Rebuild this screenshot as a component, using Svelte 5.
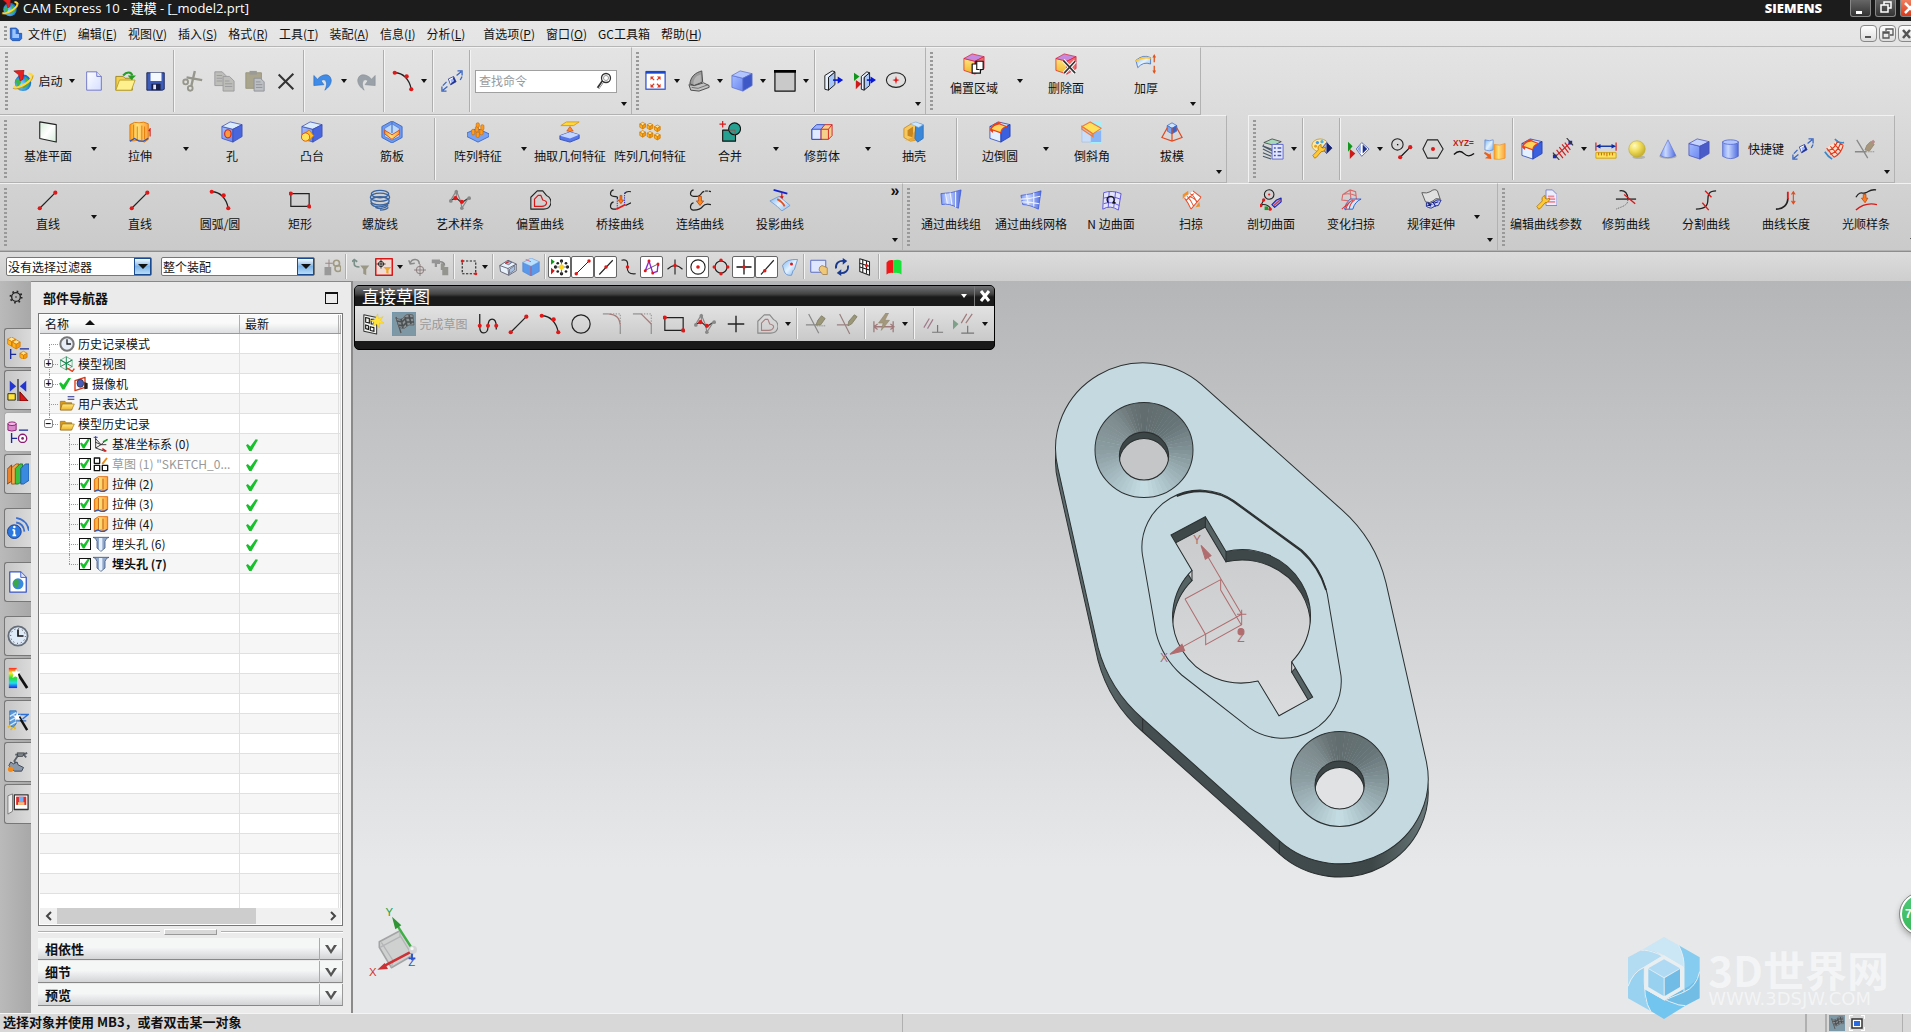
<script lang="ts">
	type Item = { kind: 'big' | 'icon' | 'text' | 'sep'; icon?: string; label?: string; drop?: boolean; on?: boolean };

	const big = (icon: string, label: string, drop = false): Item => ({ kind: 'big', icon, label, drop });
	const ico = (icon: string, drop = false, on = false): Item => ({ kind: 'icon', icon, drop, on });
	const sep: Item = { kind: 'sep' };

	// --- icon parts, drawn on a 24 x 24 grid ---
	const dot = (x: number, y: number, r = 2) => `<circle cx="${x}" cy="${y}" r="${r}" fill="#e01818"/>`;
	const line = (d: string, c = '#111', w = 1.3) => `<path d="${d}" fill="none" stroke="${c}" stroke-width="${w}"/>`;
	const fill = (d: string, c: string, s = 'none', w = 1) => `<path d="${d}" fill="${c}" stroke="${s}" stroke-width="${w}" stroke-linejoin="round"/>`;

	function cube(cx: number, cy: number, r: number, top = '#eef4ff', left = '#6f8df5', right = '#3f60d8', edge = '#2a45b0') {
		const w = r * 0.87;
		const h = r * 0.5;
		return (
			fill(`M${cx} ${cy - r}l${w} ${h}l${-w} ${h}l${-w} ${-h}z`, top, edge, 0.8) +
			fill(`M${cx - w} ${cy - h}l${w} ${h}v${r}l${-w} ${-h}z`, left, edge, 0.8) +
			fill(`M${cx + w} ${cy - h}l${-w} ${h}v${r}l${w} ${-h}z`, right, edge, 0.8)
		);
	}

	// A block seen with its wide front face on the left.
	const box = (top = '#dcecff', front = 'url(#gFront)', side = '#4a66dc', edge = '#3448b0') =>
		fill('M1 6L13 9V23L1 19Z', front, edge, 0.8) + fill('M1 6L10 1L23 4L13 9Z', top, edge, 0.8) + fill('M13 9L23 4V17L13 23Z', side, edge, 0.8);

	const goldCube = (x: number, y: number, r: number) => cube(x, y, r, '#ffe39a', '#ffb21e', '#f59a10', '#d07800');
	const arrowDown = fill('M10.5 8h3v5h2.5l-4 5-4-5h2.5z', '#ff8a1c', '#b33a00', 0.8);
	const diamond = fill('M12 5l6 6-6 7-6-7z', '#fff', '#1d2f8f') + fill('M12 5l6 6-6 7z', '#1d2f8f') + fill('M12 8l3 3-3 4-3-4z', '#9fb4ff');
	const folder =
		fill('M2 8h7l2 2h8v11H2z', '#d99a18', '#8a5a00', 0.8) + fill('M5 12h18l-4 9H2z', 'url(#gGold)', '#8a5a00', 0.8);
	const wrench = fill('M4 22l-2-3 6-6c-1-3 0-5 3-6l0 3 2 1 3-1c0 3-2 5-5 5l-5 6z', '#ffc933', '#a86c00', 0.8);
	const sketchSpline = line('M2 12l6-2 6 5 7-5', '#222', 1.2) + line('M2 12L8 2l5 12 1 7M14 21l7-11M8 2v8', '#888', 1.3) +
		'<g fill="#888"><circle cx="8" cy="3" r="2"/><circle cx="2" cy="13" r="2"/><circle cx="22" cy="10" r="2"/><circle cx="14" cy="21" r="2"/></g>' + dot(7, 10, 2.3) + dot(14, 14, 2.3);
	const pages = (c: string, s: string) =>
		fill('M2 2h8l4 4v11H2z', c, s) + fill('M11 7h7l5 5v11H11z', c, s) + line('M4 6h6M4 9h6M4 12h6M13 12h5M13 15h8M13 18h8', s, 1);

	const icons: Record<string, string> = {
		app: '<circle cx="12" cy="14" r="9" fill="url(#gGlobe)"/>' + fill('M14 7q5 3 5 8-5 6-8 5 6-6 3-13zM4 11l4-1 2 4-4 5z', '#3ab84a') + line('M2 18C5 22 22 13 22 6q-1-2-4-2', '#ffd83a', 2.6) + line('M1 20c5 3 22-5 22-14', '#b88400', 0.7) + fill('M2 1l11-1-1 10-3 2-2-7z', '#e52020', '#8a0808', 0.6),
		part: fill('M5 3h9l3 3v5h5v8l-3 3H8l-3-3z', '#2f73dd', '#153f94') + fill('M8 5h5v7h5v6H8z', '#9cc4ff'),
		new: fill('M4 2h11l5 5v15H4z', 'url(#gPaper)', '#6a70c8') + fill('M15 2v5h5', '#dfe6ff', '#6a70c8'),
		open: fill('M2 7h8l2 2h8v13H2z', '#f2cf4c', '#9a8520') + fill('M6 11h17l-4 11H2z', '#fff08e', '#b8a030') + line('M10 6c4-5 9-4 10 0', '#279c27', 2.2) + fill('M15 6h9l-5 5z', '#279c27'),
		save: fill('M2 3h19v18l-2 1H2z', '#3c5cb8', '#1a2458') + fill('M6 3h12v9H6z', '#f4f8ff') + fill('M7 15h10v7H7z', '#182048') + fill('M9 16h3v5H9z', '#dfe6ff'),
		cut: line('M5 8l17 3M14 1l-4 17', '#96968c', 2.6) + '<g fill="none" stroke="#96968c" stroke-width="2"><circle cx="4" cy="13" r="2.6"/><circle cx="9" cy="20" r="2.6"/></g>',
		copy: pages('#bdbdba', '#9a9a9c'),
		paste: fill('M2 3h17v17H2z', '#a9a58c', '#98957c') + fill('M6 1h8v4H6z', '#9a9a96') + fill('M11 9h7l4 4v10H11z', '#bcbfc4', '#8e9096') + line('M13 13h5M13 16h7M13 19h7', '#8e9096', 1),
		del: line('M4 5l16 16M20 4L4 20', '#333', 2.2),
		undo: fill('M2 6l4 4c5-6 14-7 15 1 0 5-3 8-7 11 2-4 3-9 0-11-2-1-3 0-4 1l3 4-11 1z', '#3f8be8', '#2a6cc0', 0.7),
		redo: fill('M22 6l-4 4C13 4 4 3 3 11c0 5 3 8 7 11-2-4-3-9 0-11 2-1 3 0 4 1l-3 4 11 1z', '#9aa1a8', '#8a9198', 0.7),
		arc: line('M3 3c9 0 16 7 18 18', '#222', 1.4) + dot(3, 3, 2.3) + dot(16, 7, 2.3) + dot(21, 21, 2.3),
		repeat: '<g transform="rotate(20 12 12) translate(3 3) scale(.75)">' + diamond + '</g>' + line('M17 6l5-4M18 1h5v5M21 11l2-4M7 18l-5 4M1 18v5h5M6 13l-4 4', '#3a66c0', 1.4),
		fit: fill('M1 2h21v19H1z', '#fff', '#4a68d8', 1.6) + fill('M1 1h21v3H1z', '#1a48c8') + line('M7 8l3 3M16 8l-3 3M7 18l3-3M16 18l-3-3', '#e33820', 1.3) + fill('M6 7h4l-4 4zM17 7v4l-4-4zM6 19v-4l4 4zM17 19h-4l4-4z', '#e33820'),
		orient: fill('M2 15C3 7 8 3 15 1l1 12-9 4z', '#9a9a9a', '#444') + fill('M6 13c1-5 4-7 8-8v8l-8 3z', '#b6b6b6') + fill('M1 16l6 1 10-3 6 3v2l-11 4-9-1z', '#c2c2c2', '#444') + line('M4 19l7 1 11-4', '#555', 0.8),
		shaded: box('#b4c6ff', 'url(#gFront)', '#3f58c8', '#5a70d0'),
		bgrect: fill('M1 1h22v22H1z', '#c9c9c9', '#111', 1.3) + fill('M0 0h24v3H0z', '#000'),
		section: fill('M6 8l7-6v14l-7 6z', '#a9c7f8', '#111') + fill('M2 6l8-5 3 1-7 6v14l-4-1z', '#e9f1ff', '#111') + line('M11 11h8', '#0718d8', 1.8) + fill('M16 7l6 4-6 4z', '#0718d8'),
		sectionEdit: fill('M0 3l6 4-6 5z', '#12951c') + fill('M2 11l6 4-6 6z', '#d01818') + fill('M11 8l6-5v14l-6 5z', '#a9c7f8', '#111') + fill('M8 7l6-5 3 1-6 5v14l-3-1z', '#e9f1ff', '#111') + line('M14 11h6', '#0718d8', 1.8) + fill('M18 7l6 4-6 4z', '#0718d8'),
		ellipse: '<ellipse cx="12" cy="11" rx="10.5" ry="8" fill="none" stroke="#222" stroke-width="1.2"/>' + fill('M12 6.500l1 3.500 3 1-3 1-1 3.500-1-3.500-3-1 3-1z', '#e01818'),
		offsetFace: box('#c58ae0', 'url(#gGold)', '#f06a6a', '#d8203a') + fill('M10 12h4V9h8v9h-3v4h-9z', '#fff', '#111', 1.3) + line('M15 9v9h3', '#111', 1.2),
		deleteFace: box('#c58ae0', 'url(#gGold)', '#f06a6a', '#d8203a') + line('M9 8l13 14M22 9L10 22', '#fff', 4) + line('M9 8l13 14M22 9L10 22', '#333', 1.8),
		thicken: fill('M1 8q8-7 16-3v7q-8-3-14 4z', 'url(#gPale)', '#3565b8', 0.8) + line('M1 9q8-6 16-3', '#ffc83a', 2) + line('M21 3v7M21 14v7', '#e0531c', 1.4) + fill('M19 5l2-4 2 4zM19 19l2 4 2-4z', '#e0531c'),

		plane: fill('M3 1l18 3v19L3 19z', 'url(#gMint)', '#222', 1.2),
		extrude: fill('M1 4q5-4 10-2 5-2 10 1v17l-4 3-6-2-10 1z', 'url(#gOrange)', '#e07800') + line('M5 4v16M9 6v15M14 5v16M17 6v14', '#e07800', 1) + line('M1 22l5-3 5 3 5 0 5-3', '#2a58c8', 1.4) + line('M23 17V8M21.5 11l2-3', '#d81818', 1.2),
		hole: box() + '<ellipse cx="7.5" cy="14" rx="3.5" ry="4.5" fill="#ff9a3c" stroke="#d02020" stroke-width="1.2"/>',
		boss: box() + fill('M3 14l6-4 5 6-6 6z', '#ffc02a', '#d07800') + '<circle cx="5" cy="17.5" r="4.500" fill="#ffe35a" stroke="#e04a10"/>',
		rib: fill('M12 0l11 6v12l-11 6L1 18V6z', '#6f9af0', '#3a68c8') + fill('M12 3l8 5v9l-8 4-8-4V8z', '#bcd8fb', '#4a76c8', 0.8) + line('M12 1v12', '#4a76c8') + fill('M4 10l8 5 8-5v4l-8 6-8-6z', 'url(#gOrange)', '#d84a10'),
		pattern: fill('M0 13l11-5 13 6v3l-12 6-12-6z', '#79a3f2', '#3a68c8') + '<g fill="#ff9a1c" stroke="#c06400" stroke-width=".6"><rect x="5" y="9" width="3.5" height="6" rx="1.5"/><rect x="10" y="12" width="3.5" height="6" rx="1.5"/><rect x="9" y="6" width="3.5" height="6" rx="1.5"/><rect x="14" y="9" width="3.5" height="6" rx="1.5"/><rect x="10" y="2" width="3.500" height="5" rx="1.5"/><rect x="15" y="4" width="3.5" height="6" rx="1.5"/></g>',
		extract: fill('M2 5l6-4h14l-6 4z', '#ffd83a', '#d89a20') + fill('M11 15V11H8.500l3.500-5 3.500 5H13v4z', '#ff8a2c', '#c84a00', 0.7) + fill('M1 16v4l11 3 10-4v-4l-10-3z', '#5577ea', '#3450b8') + fill('M1 16l11-4 10 3-10 4z', '#c4d6ff'),
		patternGeom: goldCube(4, 5, 3.6) + goldCube(12, 6, 3.6) + goldCube(20, 8, 3.6) + goldCube(4, 14, 3.6) + goldCube(12, 15, 3.6) + goldCube(20, 17, 3.6),
		unite: fill('M4 10h14v12H4z', '#26a090', '#111', 1.2) + '<circle cx="17" cy="8.5" r="6.5" fill="#26a090" stroke="#111" stroke-width="1.2"/>' + line('M10.5 10h7v5', '#b04040', 0.8) + line('M4 0v7M.5 3.5h7', '#d81818', 1.3),
		trimBody: fill('M1 9l5-5h9v12l-3 4H1z', '#9db2ff', '#2a45c0') + fill('M1 9h10v11H1z', '#dfe9ff', '#2a45c0') + fill('M11 9l4-5h8v12l-4 4h-8z', '#f4d08a', '#d02020', 1) + line('M11 9h8v11M19 9l4-5', '#d02020', 1),
		shell: fill('M1 8l8-5 5-1v19l-6 1-7-4z', '#f5c860', '#c89030') + fill('M5 10l6-4v12l-6-2z', '#c8861c') + fill('M11 13l4-4v12H2l8-3z', '#f0a830') + fill('M14 2l8 2v15l-6 4-3-4z', '#3c88d8', '#3070c0') + fill('M8 3l6-2 8 3-5 3z', '#cfe8ff', '#7aa8d8', 0.6),
		edgeBlend: box('#cfe4ff', '#e4f0ff', '#3a60e0', '#1a38b0') + fill('M1 10q1-6 9-9l4 1q-8 3-9 8l-1 3z', '#e8401c') + fill('M2 9q2-5 9-6l8 3q-6 2-6 7z', '#ffd45a', '#e8401c', 1.4),
		chamfer: fill('M9 0h14v24H9z', '#a6eef8') + fill('M1 8l10 6v9H1z', '#c9dcf8', '#9ab8e0', 0.6) + fill('M11 14l11-4v13H11z', '#8ab4f8') + fill('M1 6l9-5 12 7-9 6z', '#ffe25a', '#f07a3a', 1.2) + line('M1 6l12 8v3L1 9z', '#f07a3a', 1.4),
		draft: cube(12, 8, 6, '#cfe4ff', '#7aa4f0', '#3565c8', '#3a68c8') + line('M12 8v14M7 7L1 18l11 4 11-4L17 7', '#e04a20', 1.3),
		layers: fill('M2 5l9-4 10 3-8 4z', '#a8d8bc', '#333', 0.8) + line('M2 9l11 4M1 12l10 5M1 16l9 4M1 20l9 3M2 7l-1 2 10 5', '#456', 1.2) + fill('M11 7h12v16H11z', '#e4e8ff', '#5a62c8') + line('M13 11h2M13 15h2M13 19h2M17 11h4M17 15h4M17 19h4', '#4455b8', 1.6),
		palette: '<ellipse cx="10" cy="8" rx="9" ry="7" fill="#ffe9a8" stroke="#c8a040"/><circle cx="7" cy="5" r="1.8" fill="#3a9af0"/><circle cx="12" cy="4" r="1.8" fill="#4ab0e0"/><circle cx="5" cy="9" r="1.6" fill="#e8a01c"/>' + fill('M17 5l6 6-6 6-5-6z', '#aab4d8', '#1d2f8f', 0.8) + fill('M17 5l6 6-6 6z', '#15206a') + wrench,
		triDiamond: fill('M0 4l5 5-5 6z', '#12951c') + fill('M2 12l6 5-6 6z', '#d01818') + fill('M15 5l8 7-8 8-6-8z', '#fff', '#5a68a8') + fill('M14 7v10l-4-5z', '#8fa4e8') + fill('M16 7v10l5-5z', '#1d2f8f'),
		circleLine: '<circle cx="7" cy="7" r="6.2" fill="none" stroke="#222" stroke-width="1.2"/>' + line('M21 10l-11 11') + dot(21, 10, 2.3) + dot(10, 21, 2.3) + fill('M6.5 6.5h1.5v1.5H6.500z', '#111'),
		hexagon: line('M6 2h11l6 10-6 10H6L1 12z', '#222', 1.2) + dot(12, 12, 2.2),
		xyz: '<text x="0" y="9" font-size="9" font-weight="700" font-family="Liberation Sans, sans-serif" fill="#c01818">XYZ=</text>' + line('M1 18c4-4 8-4 11-1s6 4 11 0', '#111', 1.4),
		bend: fill('M1 2q5 2 9 0v11q-4 2-9 0z', 'url(#gPale)', '#5a88d8', 0.8) + fill('M11 7q6 2 12-1v16q-6 2-12 1z', 'url(#gOrange)', '#e8942c', 0.8) + fill('M1 15l5 3 1-2 1 7-7-1 3-2-4-3z', '#e8601c'),
		dimLine: line('M4 20L20 5', '#d02020', 1.3) + line('M5 13l7 9M8 10l7 9M11 7l7 9M14 5l6 8', '#d02020', 1.3) + fill('M1 18h4v4H1zM18 3h4v4h-4z', '#1a28c8') + line('M1 16l7 8M16 0l7 8', '#333', 1.2),
		measure: line('M1 5v9M23 5v9', '#d02020', 1.3) + line('M3 9h18', '#1a3aa8', 1.6) + fill('M1 9l5-2.500v5zM23 9l-5-2.500v5z', '#0a2aa8') + fill('M1 16h22v6H1z', '#ffe25a', '#d0a000') + line('M4 16v3M7 16v3M10 16v3M13 16v4M16 16v3M19 16v3', '#c05a00', 1),
		sphere: '<ellipse cx="14" cy="21" rx="7" ry="2" fill="#b4b4b4"/><circle cx="12" cy="12" r="9" fill="url(#gSphere)" stroke="#b8aa28" stroke-width=".6"/>',
		cone: '<ellipse cx="12" cy="20" rx="9.5" ry="2.500" fill="#aaa"/>' + fill('M12 2l8.500 17q-8.500 5-17 0z', 'url(#gCyl)', '#5a70d0', 0.7),
		block: box('#c4d4ff', 'url(#gFront)', '#4a5cc8', '#4450b8'),
		cylinder: fill('M4 4v16q9 5 17 0V4z', 'url(#gCyl)', '#4a60c8', 0.8) + '<ellipse cx="12.5" cy="4.5" rx="8.5" ry="2.500" fill="#b4c6ff" stroke="#4a60c8" stroke-width=".8"/>',
		mesh: fill('M4 11l11-8 7 5-10 13z', '#ffe0cc') + line('M4 11l8 10M8 9l8 9M12 6l7 8M15 3l7 5M5 14q8-2 11-11M8 18q8-3 11-12M12 21q8-4 10-13', '#e0381c', 1.2) + line('M13 1q4 5 10 4M2 15q3 5 8 8', '#3a88c8', 1.8),
		eraseTrim: line('M3 2l12 20M1 15h12', '#888', 1.4) + '<path d="M13 15h10" stroke="#777" stroke-dasharray="1 1"/>' + fill('M12 13l2-5 4-4 4 3-5 7z', '#a8967c', '#968a70') + fill('M18 4l3-2 2 2-2 3z', '#b88a8a'),

		line: line('M3 21L20 4', '#222', 1.3) + dot(3, 21, 2.3) + dot(20, 4, 2.3),
		rect: line('M2 5h20v14H2z', '#222', 1.3) + dot(2, 5, 2.3) + dot(22, 19, 2.3),
		helix: '<g fill="none" stroke="#3a64a0" stroke-width="1.500"><ellipse cx="12" cy="5.500" rx="9.500" ry="4"/><ellipse cx="12" cy="9" rx="10.5" ry="4.500"/><ellipse cx="12" cy="13" rx="10" ry="4.5"/><path d="M2 15c2 6 14 6 20 0M7 20c4 2 9 2 14-2M12 23q7 0 9-3"/></g>',
		spline: sketchSpline,
		offsetCurve: fill('M2 22V9l7-7h6l4 5q5 2 5 8-1 7-8 7z', 'none', '#222', 1.2) + fill('M6 19v-8l4-4h3l2 5q5 1 4 4-1 3-5 3z', 'none', '#d81818', 1.3),
		bridge: line('M5 1c-4 1-5 7 0 7 4 0 5 1 4 3M5 14c-4 1-5 8 0 8h3', '#222', 1.3) + line('M17 5q2-3 7-2M18 18l6-3', '#222', 1.3) + '<path d="M9 10v12M17 4v13" stroke="#2028c8" stroke-dasharray="1.5 1"/>' + line('M8 22l10-5', '#e01818', 1.8) + fill('M12 7h2v5h2l-3 4-3-4h2z', '#ff7a1c', '#b33a00', 0.7),
		join: line('M5 1c-4 1-5 7 0 7h3q4 0 6-4', '#222', 1.3) + '<path d="M14 4q4-3 10-1" fill="none" stroke="#222" stroke-width="1.3" stroke-dasharray="3 1"/>' + line('M5 15c-4 1-5 8 0 8 6 0 8-1 10-4s5-3 9-2', '#222', 1.3) + arrowDown,
		project: line('M5 1l15 4', '#1020d0', 1.8) + line('M14 4v6', '#d01818', 1.4) + fill('M11 8h5l-2 4z', '#d01818') + fill('M1 13l10-5 12 10-9 6q-4-5-13-11z', 'url(#gPale)', '#6a90c8', 0.8) + line('M9 11q6 3 8 8', '#e8501c', 2),
		thruCurves: fill('M1 5q11 0 22-4l-3 20Q10 15 2 17z', 'url(#gCyl)', '#3a56d8', 0.8) + line('M6 5l2 11M11 4l2 13M17 3l0 17', '#eef2ff', 1.2),
		thruMesh: fill('M1 7q11-1 22-5l-3 20Q10 17 3 17z', 'url(#gCyl)', '#3a56d8', 0.8) + line('M7 6l2 11M15 4l0 15M1 11q10 0 21-3M2 14q10 0 19 2', '#eef2ff', 1.2),
		nside: fill('M4 4q9-3 19 1l-3 18Q11 17 3 22z', '#e4e4ff') + line('M4 4q9-3 19 1l-3 18Q11 17 3 22zM10 3l-1 17M17 3l-2 17M4 10q9-3 18 1M4 16q8-3 17 2', '#5a50d8', 1) + fill('M9 15c-3-5 0-7 3-7s5 4 2 7h3', 'none', '#111', 1.4),
		swept: fill('M5 10L14 2l9 7-11 13z', '#fff') + line('M14 2l9 7M5 10q4 5 7 12M8 8q4 4 7 11M11 5q5 3 7 9M23 9L12 22M10 8q4 1 9 6M7 12l8-7', '#e8502c', 1.1) + fill('M3 6l6-4v4l-3 1-3 4zM17 20l4-6 1 5z', '#f0902c'),
		sectionSurf: '<circle cx="10" cy="6" r="5.2" fill="none" stroke="#222" stroke-width="1.2"/>' + line('M1 17q8-1 11 5M1 18l3-6', '#222', 1.2) + dot(4, 12, 1.8) + dot(1, 18, 1.8) + dot(11, 22, 1.8) + dot(10, 6, 1.2) + fill('M5 19h4v4H5z', '#1d9a2c') + fill('M13 17l5-5 5-2v4l-7 6z', '#b0a8d8', '#1a28b8', 1.3) + line('M15 18l7-6', '#d83a3a', 1.2),
		varSweep: line('M2 12L3 6 11 1l6 2 1 8-8 2zM11 1l1 11M3 6q7-2 14 1', '#d86a6a', 1.2) + fill('M5 22q1-7 6-11l12 0q-7 3-9 11z', '#c8ecff', '#2a58c8') + line('M6 23q2-8 8-11M2 22l10-9M10 22q1-7 6-10', '#e03a3a', 1.1),
		lawExt: fill('M2 4q6 1 9-1 5-4 8-1l3 9q-5-2-8 2-3 3-8 1z', '#e0e0e0', '#555') + fill('M7 15q5 2 8-1t8-2l-3 6q-4 0-6 2t-7-1z', '#c8d0ff', '#15208a') + line('M9 15l3 4M14 14l3 5M8 18l12-4', '#15208a', 1.2),
		editParam: fill('M12 1h7l5 5v12H12z', '#eceeff', '#7a80c8') + line('M14 8h7M14 11h8M14 14h8', '#f08a98', 1.8) + wrench,
		trimCurve: line('M5 2c6-1 9 3 9 9', '#222', 1.4) + line('M1 11h22', '#222', 1.4) + '<path d="M14 12c0 6-6 7-13 10" fill="none" stroke="#555" stroke-dasharray="1 1"/>' + line('M10 6l12 10', '#d81818', 1.5),
		divideCurve: line('M23 2c-8 0-9 4-9 10 0 7-3 9-13 10', '#222', 1.4) + line('M11 2l7 7M8 15l7 8', '#e01818', 1.5),
		curveLen: line('M1 22c8 0 13-5 13-12', '#222', 1.8) + line('M14 11V3', '#e01818', 2) + line('M20 4v11M18 6l2-3 2 3M18 13l2 3 2-3', '#e04a1c', 1.2),
		smooth: line('M1 9c5-8 7-3 11-5s5-4 11-3', '#222', 1.4) + fill('M9 6h3v4h2l-3 5-4-5h2z', '#ff7a1c', '#b33a00', 0.7) + line('M1 23q10-9 23-6', '#d81818', 1.5),

		linkFilter: fill('M2 12h9v11H2z', '#999') + '<g fill="none" stroke="#a09a80" stroke-width="2.2"><circle cx="18" cy="7" r="4"/><circle cx="20" cy="14" r="4"/></g>' + line('M3 7h10M8 2v10', '#9a8484', 1.3),
		funnelA: line('M3 2v6q0 4 7 4M0 5l3-3 4 3', '#7a9088', 2.2) + fill('M11 10h12l-4 5v8l-4-2v-6z', '#9a9884'),
		funnelB: fill('M1 1h22v22H1z', '#f0dcd4', '#d81818', 2) + '<circle cx="8" cy="8" r="3.500" fill="none" stroke="#222" stroke-width="1.2"/>' + line('M8 2v12M2 8h12', '#222', 1.2) + fill('M11 12h11l-4 4v5l-3-1v-4z', '#f0a82c'),
		rotA: line('M3 7C5 0 15 0 15 8M1 3l2 5 6-1', '#8a8a8a', 2) + '<circle cx="16" cy="16" r="5" fill="none" stroke="#8a7a7a" stroke-width="1.3"/>' + line('M16 8v16M8 16h16', '#8a7a7a', 1.2),
		rotB: fill('M1 2h11v6H8v4H5V7H1z', '#959595') + fill('M13 7h5v5h5v11h-8v-7h-2z', '#959590') + line('M12 5q6 0 6 5', '#888', 2),
		marquee: '<path d="M3 4h18v17H3z" fill="none" stroke="#222" stroke-width="1.500" stroke-dasharray="3 2"/>' + dot(3, 4) + dot(21, 21),
		wireCube: fill('M1 10l11-7 11 5v9l-10 6-11-5z', '#e8f2fc', '#445') + line('M1 10l11 4 11-6M12 14l1 9', '#445', 1) + fill('M8 7l5-3 4 2-4 3zM14 15l7-5v6l-7 5z', '#a8c0e0', '#445', 0.8) + line('M9 7l4-2', '#d82020', 1.4),
		glassCube: fill('M1 6l11 5v13L1 18zM12 11l11-6v13l-11 6z', '#5a98ec', '#4a80d0', 0.8) + fill('M1 6l11-6 11 5-11 6z', '#b8e0ff', '#6a9ad8', 0.8) + line('M12 11v12M5 2l7 3', '#e05a6a', 1.2),
		snapAll: fill('M0 1l5 4-5 4z', '#12951c') + fill('M0 13l5 4-5 5z', '#d01818') + '<g fill="#222"><circle cx="14" cy="4" r="2.2"/><circle cx="14" cy="21" r="2.2"/><circle cx="6" cy="12" r="2.2"/><circle cx="22" cy="12" r="2.2"/><circle cx="9" cy="7" r="1.8"/><circle cx="20" cy="7" r="1.8"/><circle cx="9" cy="18" r="1.8"/><circle cx="20" cy="18" r="1.8"/></g>' + line('M14 4v17M6 12h16', '#555', 1) + fill('M11 10l3-2 3 2v4l-3 2-3-2z', '#ffd41c'),
		snapMid: line('M3 22L21 3', '#222', 1.5) + dot(12, 12, 2.3),
		snapEnd: line('M2 3c8-2 9 3 8 9s2 10 11 9', '#222', 1.6) + dot(10, 12, 2.3),
		snapPole: line('M3 17L8 4l5 16 6-2 1-10 1 3', '#8a2cd0', 1.8) + line('M2 17l18-9', '#333', 1) + dot(8, 4) + dot(3, 17) + dot(13, 20) + dot(20, 8),
		snapCross: line('M12 2v20M2 15q10-10 20 0', '#222', 1.5) + dot(12, 10, 2.3),
		snapCenter: '<circle cx="12" cy="12" r="9.500" fill="none" stroke="#222" stroke-width="1.500"/>' + dot(12, 12, 2.4),
		snapQuad: '<circle cx="12" cy="12" r="8" fill="none" stroke="#222" stroke-width="1.500"/>' + dot(12, 3, 2.3) + dot(12, 21, 2.3) + dot(3, 12, 2.3) + dot(21, 12, 2.3),
		snapPoint: line('M12 2v20M2 12h20', '#111', 1.700) + dot(12, 12, 2.2),
		snapOn: line('M4 22L21 3', '#222', 1.5) + dot(9, 17, 2.3),
		snapFace: fill('M2 10Q7 1 22 2l-4 13-2 2-2 6q-8 1-10-6z', 'url(#gPale)', '#5a88c8') + dot(14, 8),
		winHand: fill('M1 3h20v16H1z', '#dfe6ff', '#5a6cc0', 1.3) + fill('M13 12l3-2 7 3v9h-6l-5-6z', '#f0c87a', '#9a7a4a'),
		cycle: line('M4 14C3 7 8 3 15 4M20 10c1 7-4 11-11 10', '#1a3a90', 2.4) + fill('M13 0l6 4-6 5zM11 24l-6-4 6-5z', '#1a3a90'),
		gridBox: fill('M5 1l13 4v18L5 18z', '#fff', '#222', 1.4) + line('M9 2v17M14 4v17M5 7l13 4M5 12l13 4', '#222', 1.5) + dot(14, 10),
		redGreen: fill('M2 6q3-4 9-3v17q-6-1-9 2z', '#f01818') + fill('M11 3q7-2 11 1v18q-3-3-11-2z', '#1ae03a'),

		sketchNew: fill('M2 2l14 3v18L2 20z', '#f2f4f0', '#333', 1.1) + line('M4 5l4 1v5l-4-1zM4 13l3 1v4l-3-1zM9 15l4 1v4l-4-1zM10 7h3v5h-3z', '#111', 1.2) + fill('M17 1l1 5 5-2-3 4 4 3-5 0 0 5-3-4-4 3 1-5-4-2 5-1z', '#ffe23a', '#e8c020', 0.5),
		flag: fill('M0 0h24v24H0z', '#7f98a6', '#6a98b0', 0.8) + line('M4 5l5 16', '#555', 1.3) + fill('M4 6q6 3 8-1t9-2l1 10q-6-1-8 2t-7 0z', '#8c9296', '#555', 0.7) + line('M5 9l5 1 4-4 7 0M7 13l4 1 4-4 7 0M9 7l2 9M13 5l2 9M17 3l2 9', '#4a4f52', 1.6),
		profile: line('M3 1v14c0 9 9 9 9 0 0-11 9-11 9 0v3', '#222', 1.4) + dot(3, 14, 2.2) + dot(12, 14, 2.2) + dot(21, 14, 2.2),
		circle: '<circle cx="12" cy="12" r="10" fill="none" stroke="#222" stroke-width="1.300"/>',
		fillet: line('M2 1h6', '#888', 1.2) + line('M8 1c9 1 12 4 13 12', '#a87a7a', 1.4) + line('M21 13v10', '#888', 1.2) + '<path d="M10 1h11v11" fill="none" stroke="#888" stroke-dasharray="1.5 1.5"/>',
		chamferCurve: line('M1 1h9', '#888', 1.2) + line('M10 1l11 11', '#a87a7a', 1.4) + line('M21 12v11', '#888', 1.2) + '<path d="M10 1h11v11" fill="none" stroke="#888" stroke-dasharray="1.5 1.5"/>',
		plus: line('M12 3v18M3 12h18', '#222', 1.5),
		offsetGrey: fill('M2 22V9l7-7h6l4 5q5 2 5 8-1 7-8 7z', 'none', '#888', 1.2) + fill('M6 19v-8l4-4h3l2 5q5 1 4 4-1 3-5 3z', 'none', '#a88080', 1.2),
		trimGrey: line('M4 1l11 21M1 13h12', '#888', 1.3) + '<path d="M13 14h10" stroke="#777" stroke-dasharray="1 1"/>' + fill('M12 13l2-5 4-5 4 3-5 7z', '#9a9678', '#85816a'),
		extendGrey: line('M4 1l11 22M1 13h12', '#9a8080', 1.3) + fill('M13 14l1-5 6-7 3 2-6 8z', '#9a9678', '#85816a'),
		autoDim: line('M1 9v12M22 9v12M2 15h20M5 12l-4 3 4 3M19 12l4 3-4 3', '#a07a7a', 1.4) + fill('M14 0l-8 11h5l-2 8 9-11h-5l4-8z', '#a3977c', '#8f8468', 0.6),
		constrain: line('M2 16L8 6M6 17l6-10', '#a07a8a', 1.3) + line('M11 21h12M17 13v8', '#777', 1.3),
		autoConstrain: fill('M0 7l6 5-6 6z', '#7fa088') + line('M9 11l6-10M14 11l7-10', '#a07a7a', 1.3) + line('M9 22h14M16 14v8', '#777', 1.3),

		gear: '<circle cx="12" cy="12" r="6.5" fill="none" stroke="#222" stroke-width="2"/><circle cx="12" cy="12" r="8.5" fill="none" stroke="#222" stroke-width="2.5" stroke-dasharray="2.500 4.170"/><circle cx="12" cy="12" r="1.2" fill="#222"/>',
		assembly: goldCube(5, 5, 5) + goldCube(10, 8, 5) + line('M4 13v12M4 19h6M14 13h10', '#1a2a98', 1.5) + goldCube(18, 20, 4.5),
		constraints: fill('M3 2l7 6-7 6z', '#2436d0') + fill('M21 2l-7 6 7 6z', '#2436d0') + line('M12 0v24', '#111', 1.2) + fill('M1 16h8v7H1z', '#ffe23a', '#222') + fill('M14 14v10h9z', '#d81818', '#600'),
		partNav: fill('M1 3v7q4 2 9 0V3z', '#d88ac8', '#8a1c70') + '<ellipse cx="5.5" cy="3" rx="4.5" ry="2" fill="#f0b8e4" stroke="#8a1c70"/><circle cx="17" cy="19" r="4.5" fill="#fff" stroke="#8a1c70" stroke-width="1.5"/><circle cx="17" cy="19" r="1.5" fill="#8a1c70"/>' + line('M5 13v11M5 19h6M13 10h10', '#1a2a98', 1.5),
		books: fill('M0 7l5-5v18l-5 3z', '#e8822c', '#8a3c00') + fill('M5 5l5-4h3v19l-5 3H5z', '#f5a64a', '#8a3c00', 0.8) + fill('M9 6l5-5h3v19l-5 3H9z', '#3cc040', '#0e6a18', 0.8) + fill('M15 6l5-5h4v18l-6 4h-3z', '#3a8ae0', '#12489a', 0.8),
		web: '<g fill="none" stroke="#3a70d0" stroke-width="2"><path d="M10 6q8 1 9 10M10 1q12 2 14 14"/></g><circle cx="8" cy="16" r="7.5" fill="#2a78e0" stroke="#1a3c90"/>' + line('M8 14v6M6 20h4M6 14h2', '#fff', 2) + '<circle cx="8" cy="11" r="1.4" fill="#fff"/>',
		webPage: fill('M3 1h12l6 6v16H3z', '#fff', '#3a58c8', 1.4) + fill('M15 1v6h6', '#dfe6ff', '#3a58c8') + '<circle cx="12" cy="14" r="6" fill="#3a8ae0"/>' + fill('M8 10q4-2 5 1l-1 8q-5-2-5-6z', '#38a848'),
		clock: '<circle cx="12" cy="12" r="10.5" fill="#dfeaf8" stroke="#666e7a" stroke-width="2"/><circle cx="12" cy="12" r="8" fill="none" stroke="#222" stroke-dasharray="1 3.19"/>' + line('M12 5v7h6', '#111', 1.8),
		spectrum: fill('M2 1h9v22H2z', 'url(#gSpectrum)') + line('M11 6l11 17', '#111', 3) + fill('M10 1l1 4 4 0-3 3 1 4-4-2-3 2 1-4-2-3 4 0z', '#fff'),
		mill: fill('M3 2h7v14l-3 4-4-2z', '#5a98d8', '#3a78b8') + line('M3 8l7-4M3 13l7-4M3 18l7-4', '#d4eaff', 1.4) + line('M12 6h11l-6 5M11 13h10', '#2a70d8', 1.5) + line('M13 8l9 15', '#111', 2.6) + fill('M11 3l1 4 3-1-2 3 2 3-4-1-2 2 0-4-3-2 4 0z', '#fff') + line('M1 20l3-2M4 23l2-3M9 22l-1-3', '#e8b81c', 1.8),
		robot: line('M9 4h9l4-2M12 5l-4 6 3 5M18 4l3 3', '#5a6068', 2) + fill('M11 2h8l-2 4h-5z', '#7a8088', '#333', 0.7) + fill('M4 12l3 2 4-2 1 3 6 3-2 4H8l-6-6z', '#8a98aa', '#3a4250') + '<circle cx="4" cy="20" r="3" fill="#f08a1c"/>',
		book3d: fill('M1 3l5-2v19l-5 3z', '#ececec', '#777') + fill('M8 2h15v16H8z', '#fff', '#333', 1.4) + fill('M10 4h11v9H10z', '#e02a2a') + fill('M13 4h5v6h-5z', '#6ab0f8') + fill('M12 10h7v3h-7z', '#f4c080'),

		tClock: '<circle cx="12" cy="12" r="10" fill="#e8eef8" stroke="#777" stroke-width="3"/>' + line('M12 5v7h6', '#222', 2),
		tViews: cube(11, 11, 10, 'none', 'none', 'none', '#14844c') + line('M11 1v20M2 6l18 10M20 6L2 16', '#14844c', 1.4) + line('M12 18l8 5 3-4', '#e0401c', 2.2),
		tCamera: fill('M3 7l15-5v15L3 22z', '#fff', '#d83818', 2) + '<ellipse cx="11" cy="11" rx="5" ry="6" fill="#4a5cb8" stroke="#222"/>' + fill('M17 9l5 2v8l-5 1z', '#222'),
		tFolder: folder,
		tExpr: folder + line('M13 1h10M13 5h10', '#222a88', 1.6),
		tCsys: line('M4 4v14l8-5-8-9M4 18l14 5M12 13l9-8M3 9l9 4 8 0', '#333', 1.4) + line('M14 19l6 4', '#d81818', 2.4) + line('M15 9l7-4', '#18982a', 2.4) + line('M1 2h6M4 0v6', '#2030c8', 1.3),
		tSketch: fill('M2 3h8v8H2zM2 14h8v8H2z', '#fff', '#111', 2) + fill('M14 14h8v8h-8z', '#fff', '#111', 2) + line('M21 3l-7 9', '#e88a1c', 3),
		tExtrude: fill('M2 5l6-4h14v18l-4 3-6-1-10 2z', 'url(#gOrange)', '#d86000', 1.3) + line('M8 3v18M15 4v16', '#b84a00', 1.3) + line('M2 23l5-2 5 2 5 0 5-3', '#2a58c8', 1.8),
		tHole: fill('M0 2q4 0 6 6v10l6 5 6-5V8q2-6 6-6z', '#8fa8cc', '#4a5f86', 1.3) + fill('M9 3h5v18l-3 1-2-2z', '#e6f0fa')
	};

	const menus = [
		['文件', 'F'], ['编辑', 'E'], ['视图', 'V'], ['插入', 'S'], ['格式', 'R'], ['工具', 'T'],
		['装配', 'A'], ['信息', 'I'], ['分析', 'L'], ['首选项', 'P'], ['窗口', 'O'], ['GC工具箱', ''], ['帮助', 'H']
	];

	const standardBar: Item[] = [
		ico('new'), ico('open'), ico('save'), sep, ico('cut'), ico('copy'), ico('paste'), ico('del'), sep,
		ico('undo', true), ico('redo'), sep, ico('arc', true), sep, ico('repeat'), sep
	];
	const viewBar: Item[] = [
		ico('fit', true), ico('orient', true), ico('shaded', true), ico('bgrect', true), sep,
		ico('section'), ico('sectionEdit'), ico('ellipse')
	];
	const syncBar: Item[] = [big('offsetFace', '偏置区域', true), big('deleteFace', '删除面'), big('thicken', '加厚')];
	const featureBar: Item[] = [
		big('plane', '基准平面', true), big('extrude', '拉伸', true), big('hole', '孔'), big('boss', '凸台'), big('rib', '筋板'), sep,
		big('pattern', '阵列特征', true), big('extract', '抽取几何特征'), big('patternGeom', '阵列几何特征'), big('unite', '合并', true),
		big('trimBody', '修剪体', true), big('shell', '抽壳'), sep,
		big('edgeBlend', '边倒圆', true), big('chamfer', '倒斜角'), big('draft', '拔模')
	];
	const shortcutBar: Item[] = [
		ico('layers', true), sep, ico('palette'), sep, ico('triDiamond', true), ico('circleLine'), ico('hexagon'), ico('xyz'), ico('bend'), sep,
		ico('edgeBlend'), ico('dimLine', true), ico('measure'), ico('sphere'), ico('cone'), ico('block'), ico('cylinder'),
		{ kind: 'text', label: '快捷键' }, ico('repeat'), ico('mesh'), ico('eraseTrim')
	];
	const curveBar: Item[] = [
		big('line', '直线', true), big('line', '直线'), big('arc', '圆弧/圆'), big('rect', '矩形'), big('helix', '螺旋线'),
		big('spline', '艺术样条'), big('offsetCurve', '偏置曲线'), big('bridge', '桥接曲线'), big('join', '连结曲线'), big('project', '投影曲线')
	];
	const surfaceBar: Item[] = [
		big('thruCurves', '通过曲线组'), big('thruMesh', '通过曲线网格'), big('nside', 'N 边曲面'), big('swept', '扫掠'),
		big('sectionSurf', '剖切曲面'), big('varSweep', '变化扫掠'), big('lawExt', '规律延伸', true)
	];
	const editCurveBar: Item[] = [
		big('editParam', '编辑曲线参数'), big('trimCurve', '修剪曲线'), big('divideCurve', '分割曲线'), big('curveLen', '曲线长度'), big('smooth', '光顺样条')
	];
	const selectionBar: Item[] = [
		sep, ico('funnelA'), ico('funnelB', true), ico('rotA'), ico('rotB'), sep, ico('marquee', true), sep,
		ico('wireCube'), ico('glassCube'), sep,
		ico('snapAll', false, true), ico('line', false, true), ico('snapMid', false, true), ico('snapEnd'), ico('snapPole', false, true),
		ico('snapCross'), ico('snapCenter', false, true), ico('snapQuad'), ico('snapPoint', false, true), ico('snapOn', false, true), ico('snapFace'), sep,
		ico('winHand'), ico('cycle'), ico('gridBox'), sep, ico('redGreen')
	];
	const sketchBar: Item[] = [
		ico('profile'), ico('line'), ico('arc'), ico('circle'), ico('fillet'), ico('chamferCurve'), ico('rect'), ico('spline'),
		ico('plus'), ico('offsetGrey', true), sep, ico('trimGrey'), ico('extendGrey'), sep, ico('autoDim', true), sep,
		ico('constrain'), ico('autoConstrain', true)
	];

	const resourceTabs = [
		['assembly', 'constraints', 'partNav', 'books'],
		['web'],
		['webPage'],
		['clock', 'spectrum', 'mill', 'robot', 'book3d']
	];

	const tree = [
		{ icon: 'tClock', text: '历史记录模式', branch: 'first' },
		{ icon: 'tViews', text: '模型视图', branch: 'mid', expand: '+' },
		{ icon: 'tCamera', text: '摄像机', branch: 'mid', expand: '+', tick: true },
		{ icon: 'tExpr', text: '用户表达式', branch: 'mid' },
		{ icon: 'tFolder', text: '模型历史记录', branch: 'last', expand: '−' },
		{ icon: 'tCsys', text: '基准坐标系 (0)', branch: 'mid', child: true },
		{ icon: 'tSketch', text: '草图 (1) "SKETCH_0...', branch: 'mid', child: true, muted: true },
		{ icon: 'tExtrude', text: '拉伸 (2)', branch: 'mid', child: true },
		{ icon: 'tExtrude', text: '拉伸 (3)', branch: 'mid', child: true },
		{ icon: 'tExtrude', text: '拉伸 (4)', branch: 'mid', child: true },
		{ icon: 'tHole', text: '埋头孔 (6)', branch: 'mid', child: true },
		{ icon: 'tHole', text: '埋头孔 (7)', branch: 'last', child: true, current: true }
	];
	const blankRows = Array.from({ length: 40 });

	// Countersink shading: a colour for each direction, clockwise from the top.
	const shade: [number, number[]][] = [
		[0, [97, 108, 110]], [50, [103, 117, 120]], [90, [129, 146, 150]], [140, [166, 188, 194]], [180, [197, 221, 228]],
		[220, [170, 193, 199]], [270, [139, 157, 161]], [320, [126, 139, 142]], [345, [102, 114, 116]], [360, [97, 108, 110]]
	];
	function shadeAt(deg: number) {
		const i = Math.max(1, shade.findIndex(([a]) => a >= deg));
		const [a0, c0] = shade[i - 1];
		const [a1, c1] = shade[i];
		const t = (deg - a0) / (a1 - a0);
		return `rgb(${c0.map((v, k) => Math.round(v + (c1[k] - v) * t)).join(',')})`;
	}
	const wedges = Array.from({ length: 60 }, (_, i) => {
		const p = (deg: number) => {
			const r = (deg * Math.PI) / 180;
			return `${(147 * Math.sin(r)).toFixed(1)},${(-133 * Math.cos(r)).toFixed(1)}`;
		};
		return { points: `0,0 ${p(i * 6)} ${p(i * 6 + 6.6)}`, color: shadeAt(i * 6 + 3) };
	});

	const platePath =
		'M515,125A263,240 0 0 0 84,360L204,860A442,402 0 0 0 338,1060L748,1402A265,238 0 0 0 1189,1180L1068,680A442,402 0 0 0 935,475Z';
	const cutPath =
		'M423,546L526,495L588,592A206,186 0 0 1 785,901L848,1000L747,1052L684,955A206,186 0 0 1 486,645Z';
</script>

{#snippet icon(name: string, size = 22)}
	<svg class="ic" width={size} height={size} viewBox="0 0 24 24" aria-hidden="true">{@html icons[name]}</svg>
{/snippet}

{#snippet tools(items: Item[])}
	{#each items as it}
		{#if it.kind === 'sep'}
			<span class="sep"></span>
		{:else if it.kind === 'text'}
			<button class="tool tool--text">{it.label}</button>
		{:else if it.kind === 'big'}
			<button class="tool tool--big">{@render icon(it.icon ?? '')}<span>{it.label}</span></button>
		{:else}
			<button class="tool tool--icon" class:tool--on={it.on} aria-label={it.icon}>{@render icon(it.icon ?? '')}</button>
		{/if}
		{#if it.drop}<button class="drop" aria-label="menu"></button>{/if}
	{/each}
{/snippet}

{#snippet bar(items: Item[], extra = '')}
	<div class="bar {extra}">
		<span class="grip"></span>
		{@render tools(items)}
		<button class="more" aria-label="options"></button>
	</div>
{/snippet}

<svg class="defs" width="0" height="0" aria-hidden="true">
	<defs>
		<linearGradient id="gPaper" x1="0" y1="0" x2="1" y2="1"><stop offset="0" stop-color="#fff" /><stop offset="1" stop-color="#d4deff" /></linearGradient>
		<linearGradient id="gGold" x1="0" y1="0" x2="0" y2="1"><stop offset="0" stop-color="#ffe680" /><stop offset="1" stop-color="#f0b428" /></linearGradient>
		<linearGradient id="gOrange" x1="0" y1="0" x2="1" y2="0"><stop offset="0" stop-color="#ff9a1c" /><stop offset=".4" stop-color="#ffe27a" /><stop offset="1" stop-color="#ffa03c" /></linearGradient>
		<linearGradient id="gMint" x1="0" y1="0" x2="1" y2="1"><stop offset="0" stop-color="#d4ecd8" /><stop offset=".5" stop-color="#fff" /><stop offset="1" stop-color="#d4ecd8" /></linearGradient>
		<linearGradient id="gPale" x1="0" y1="0" x2="1" y2="1"><stop offset="0" stop-color="#7ab4f0" /><stop offset=".5" stop-color="#e4f2ff" /><stop offset="1" stop-color="#7ab4ec" /></linearGradient>
		<linearGradient id="gFront" x1="0" y1="0" x2="1" y2="1"><stop offset="0" stop-color="#a4bcff" /><stop offset="1" stop-color="#6a86f0" /></linearGradient>
		<linearGradient id="gCyl" x1="0" y1="0" x2="1" y2="0"><stop offset="0" stop-color="#7a96f4" /><stop offset=".35" stop-color="#c8d8ff" /><stop offset="1" stop-color="#4f6ce0" /></linearGradient>
		<linearGradient id="gSpectrum" x1="0" y1="0" x2="0" y2="1"><stop offset="0" stop-color="#f22" /><stop offset=".25" stop-color="#fe2" /><stop offset=".5" stop-color="#2d3" /><stop offset=".75" stop-color="#2de" /><stop offset="1" stop-color="#22e" /></linearGradient>
		<radialGradient id="gSphere" cx=".35" cy=".3" r=".7"><stop offset="0" stop-color="#fffbc0" /><stop offset=".5" stop-color="#f0dc5a" /><stop offset="1" stop-color="#c8b030" /></radialGradient>
		<radialGradient id="gGlobe" cx=".4" cy=".6" r=".6"><stop offset="0" stop-color="#8ae0ff" /><stop offset="1" stop-color="#0c6cd0" /></radialGradient>
	</defs>
</svg>

<div class="app">
	<header class="titlebar">
		{@render icon('app', 18)}
		<h1>CAM Express 10 - 建模 - [_model2.prt]</h1>
		<span class="brand">SIEMENS</span>
		<div class="winbtns">
			<button aria-label="minimize"><svg width="19" height="16" viewBox="0 0 19 16"><path d="M5 11h6v3H5z" fill="#fff" /></svg></button>
			<button aria-label="restore"><svg width="19" height="16" viewBox="0 0 19 16"><path d="M8 5V2h7v6h-3M5 5h7v7H5z" fill="none" stroke="#fff" stroke-width="1.5" /></svg></button>
			<button class="close" aria-label="close"><svg width="19" height="16" viewBox="0 0 19 16"><path d="M4 3l10 10M14 3L4 13" stroke="#fff" stroke-width="2.5" /></svg></button>
		</div>
	</header>

	<div class="ribbon">
		<nav class="menubar">
			<span class="grip"></span>
			{@render icon('part', 16)}
			{#each menus as [name, key], i}
				{#if i === 9}<span class="menubar__gap"></span>{/if}
				<button>{name}{#if key}(<u>{key}</u>){/if}</button>
			{/each}
			<div class="mdibtns">
				<button aria-label="minimize"><svg width="15" height="15" viewBox="0 0 15 15"><path d="M4 11h6" stroke="#555" stroke-width="2" /></svg></button>
				<button aria-label="restore"><svg width="15" height="15" viewBox="0 0 15 15"><path d="M6 5V3h7v6h-3M3 6h6v6H3zM3 7h6" fill="none" stroke="#555" stroke-width="1.3" /></svg></button>
				<button aria-label="close"><svg width="15" height="15" viewBox="0 0 15 15"><path d="M4 4l7 8M11 4l-7 8" stroke="#555" stroke-width="2.5" /></svg></button>
			</div>
		</nav>

		<div class="row">
			<div class="bar bar--standard">
				<span class="grip"></span>
				<button class="tool tool--start">{@render icon('app')}<span>启动</span></button>
				<button class="drop" aria-label="menu"></button>
				{@render tools(standardBar)}
				<label class="search">
					<input type="text" placeholder="查找命令" aria-label="查找命令" />
					<svg width="16" height="18" viewBox="0 0 16 18"><circle cx="10" cy="6" r="4.5" fill="none" stroke="#333" stroke-width="1.3" /><circle cx="10" cy="6" r="2.5" fill="none" stroke="#999" /><path d="M7 9l-5 7" stroke="#333" stroke-width="3" /><path d="M7 10l-4 6" stroke="#eee" /></svg>
				</label>
				<button class="more" aria-label="options"></button>
			</div>
			{@render bar(viewBar)}
			{@render bar(syncBar)}
		</div>

		<div class="row">
			{@render bar(featureBar)}
			{@render bar(shortcutBar, 'bar--right')}
		</div>

		<div class="row">
			<div class="bar bar--curve">
				<span class="grip"></span>
				{@render tools(curveBar)}
				<button class="overflow" aria-label="more commands">»</button>
				<button class="more" aria-label="options"></button>
			</div>
			{@render bar(surfaceBar)}
			{@render bar(editCurveBar, 'bar--fill')}
		</div>
	</div>

	<div class="selbar">
		<div class="combo combo--filter">
			<select aria-label="选择过滤器"><option>没有选择过滤器</option></select>
		</div>
		<div class="combo combo--scope">
			<select aria-label="选择范围"><option>整个装配</option></select>
		</div>
		{@render tools([ico('linkFilter')])}
		{@render tools(selectionBar)}
	</div>

	<main class="work">
		<aside class="resbar">
			<button class="resbar__gear" aria-label="settings">{@render icon('gear', 16)}</button>
			{#each resourceTabs as group}
				<div class="resbar__group">
					{#each group as tab}
						<button class="restab" class:restab--active={tab === 'partNav'} aria-label={tab}>{@render icon(tab)}</button>
					{/each}
				</div>
			{/each}
		</aside>

		<section class="nav">
			<div class="nav__head">
				<h2>部件导航器</h2>
				<button class="nav__max" aria-label="maximize"></button>
			</div>
			<div class="nav__box">
				<div class="nav__rows">
					<table>
						<thead>
							<tr><th class="c-name">名称<i class="sort"></i></th><th class="c-state">最新</th><th></th></tr>
						</thead>
						<tbody>
							{#each tree as n}
								<tr>
									<td>
										<label class="node" class:node--child={n.child} class:node--muted={n.muted} class:node--current={n.current}>
											<span class="twig twig--{n.branch}">
												{#if n.expand}<b class="expander">{n.expand}</b>{/if}
											</span>
											{#if n.child}<input type="checkbox" checked />{/if}
											{#if n.tick}<i class="tick"></i>{/if}
											{@render icon(n.icon, 16)}
											<span class="node__text">{n.text}</span>
										</label>
									</td>
									<td>{#if n.child}<i class="tick"></i>{/if}</td>
									<td></td>
								</tr>
							{/each}
							{#each blankRows as _}
								<tr><td></td><td></td><td></td></tr>
							{/each}
						</tbody>
					</table>
				</div>
				<div class="hscroll">
					<button aria-label="left"><svg width="8" height="10" viewBox="0 0 8 10"><path d="M6 1L2 5l4 4" fill="none" stroke="#444" stroke-width="2" /></svg></button>
					<span class="hscroll__thumb"></span>
					<button aria-label="right"><svg width="8" height="10" viewBox="0 0 8 10"><path d="M2 1l4 4-4 4" fill="none" stroke="#444" stroke-width="2" /></svg></button>
				</div>
			</div>
			<div class="splitter"><span></span></div>
			{#each ['相依性', '细节', '预览'] as name}
				<button class="fold">
					<span>{name}</span>
					<svg width="22" height="22" viewBox="0 0 22 22"><path d="M5 7h3l3 5 3-5h3l-6 9z" fill="#555" /></svg>
				</button>
			{/each}
		</section>

		<section class="view">
			<div class="palette">
				<div class="palette__title">
					<span>直接草图</span>
					<button class="drop drop--light" aria-label="menu"></button>
					<button class="palette__close" aria-label="close"><svg width="12" height="12" viewBox="0 0 12 12"><path d="M2 1l8 10M10 1L2 11" stroke="#fff" stroke-width="3" /></svg></button>
				</div>
				<div class="palette__body">
					{@render tools([ico('sketchNew')])}
					<button class="tool tool--finish">{@render icon('flag', 24)}<span>完成草图</span></button>
					{@render tools(sketchBar)}
				</div>
				<div class="palette__foot"></div>
			</div>

			<svg class="model" width="420" height="560" viewBox="0 0 420 560">
				<defs>
					<linearGradient id="side" gradientUnits="userSpaceOnUse" x1="76" y1="0" x2="1193" y2="0">
						<stop offset="0" stop-color="#5f6e70" /><stop offset=".15" stop-color="#566365" /><stop offset=".24" stop-color="#454f51" />
						<stop offset=".7" stop-color="#40494b" /><stop offset=".85" stop-color="#3e4747" /><stop offset="1" stop-color="#6a797c" />
					</linearGradient>
					<linearGradient id="backdrop" gradientUnits="userSpaceOnUse" x1="0" y1="-191" x2="0" y2="1444">
						<stop offset="0" stop-color="#b5b6b8" /><stop offset="1" stop-color="#e6e8e9" />
					</linearGradient>
					<clipPath id="cutClip"><path d={cutPath} /></clipPath>
					<clipPath id="boreClip"><ellipse cx="0" cy="17" rx="74" ry="67" /></clipPath>
				</defs>

				<g transform="scale(.33333 .35714)">
					<g stroke="#2b2f30" stroke-width="3">
						<path d={platePath} transform="translate(0 37)" fill="url(#side)" />
						<path d="M78,315v37h8v-37zM1186,1230v37h7v-37z" fill="#5c6a6c" stroke="none" />
						<path d={platePath} fill="#c4d9e0" />
						<path d="M338,1060v37M748,1402v37" />
					</g>

					{#each [[342, 308], [929, 1229]] as [x, y]}
						<g transform="translate({x} {y})">
							{#each wedges as w}<polygon points={w.points} fill={w.color} />{/each}
							<ellipse rx="147" ry="133" fill="none" stroke="#2b2f30" stroke-width="3" />
							<ellipse cy="17" rx="74" ry="67" fill="#3d4647" />
						</g>
						<g transform="translate({x} {y})" clip-path="url(#boreClip)">
							<ellipse cy="35" rx="74" ry="67" fill={y < 600 ? '#c5c6c8' : '#e0e2e3'} stroke="#2b2f30" stroke-width="3" />
						</g>
						<ellipse cx={x} cy={y + 17} rx="74" ry="67" fill="none" stroke="#2b2f30" stroke-width="3" />
					{/each}

					<g fill="none" stroke="#2b2f30">
						<path stroke-width="3" d="M612,450A175,160 0 0 0 337,600L378,820A263,239 0 0 0 455,938L658,1086A175,160 0 0 0 933,940L892,712A263,239 0 0 0 815,588Z" />
						<path stroke-width="5" d="M440,437A175,160 0 0 1 610,452L813,590A263,239 0 0 1 888,700" />
					</g>

					<path d={cutPath} fill="#3f4849" />
					<g clip-path="url(#cutClip)">
						<path d="M526,495l62,97v30l-62,-97zM486,645v40L430,800V690zM785,901l63,99v30l-63,-97zM800,690l42,60v60z" fill="#566365" />
						<path d={cutPath} transform="translate(0 29)" fill="url(#backdrop)" stroke="#2b2f30" stroke-width="3" />
					</g>
					<path d={cutPath} fill="none" stroke="#2b2f30" stroke-width="3" />
					<path d="M526,495v30M588,592v30M486,645v30M785,901v30" stroke="#2b2f30" stroke-width="3" />

					<g fill="none" stroke="#b06c6e" stroke-width="3">
						<path d="M635,768L520,585M635,768L425,876M465,725L572,671M465,725L527,825V853L635,797V755M572,671V700L634,798M621,768h28" />
						<path d="M513,575l30,29l-17,10zM420,880l44,-10l-8,-18z" fill="#b06c6e" />
						<circle cx="633" cy="817" r="9" fill="#b06c6e" />
					</g>
				</g>
				<g fill="#b06c6e" text-anchor="middle"><text x="167" y="204">Y</text><text x="134" y="322">X</text><text x="211" y="302">Z</text></g>
			</svg>

			<svg class="triad" width="100" height="110" viewBox="9 30 300 330">
				<path d="M88,188L150,155L190,215L186,230L124,266L88,205Z" fill="#c9cacb" fill-opacity=".8" stroke="#a4a4a6" stroke-width="5" stroke-linejoin="round" />
				<path d="M90,205L152,172L186,228M94,190L130,246L124,264M150,155v17" fill="none" stroke="#b4b5b6" stroke-width="4" />
				<path d="M186,208L142,140" stroke="#3eb043" stroke-width="7" /><path d="M126,113l28,26l-18,12z" fill="#2f9434" />
				<path d="M184,218L100,262" stroke="#cc3235" stroke-width="8" /><path d="M82,272l22,-20l10,18z" fill="#cc3235" />
				<path d="M186,222v22M176,238h20" stroke="#1d49c8" stroke-width="5" />
				<circle cx="189" cy="212" r="12" fill="#d4d4d6" />
				<circle cx="186" cy="209" r="5" fill="#f6f6f6" />
				<g font-size="34" text-anchor="middle"><text x="118" y="111" fill="#2fa034">Y</text><text x="68" y="292" fill="#d03235">X</text><text x="185" y="262" fill="#2a58d0">Z</text></g>
			</svg>

			<div class="badge">7</div>

			<div class="mark">
				<svg width="72" height="82" viewBox="0 0 216 246">
					<path d="M108,0L152,25Q170,60 168,92L108,55Q75,35 40,40Z" fill="#cbe6f5" />
					<path d="M152,25L215,61V104Q205,150 168,165V92Q170,60 152,25Z" fill="#86ccf0" />
					<path d="M215,104V184L172,206Q110,205 108,190L168,155Q205,140 215,104Z" fill="#72bde6" />
					<path d="M172,206L108,246L68,222Q45,190 49,155L108,190Q140,208 172,206Z" fill="#72c5ef" />
					<path d="M68,222L0,184V148Q15,105 49,92V155Q45,190 68,222Z" fill="#98d2f0" />
					<path d="M0,148V61L40,40Q80,35 100,58L49,90Q12,108 0,148Z" fill="#b3dcf3" />
					<path d="M152,25Q170,60 168,92V165M215,104Q205,150 168,165L108,190M172,206Q140,208 49,155M68,222Q45,190 49,92M0,148Q15,105 49,90L108,55M40,40Q75,35 168,92" fill="none" stroke="#e4eef3" stroke-width="3" />
					<path d="M108,55L168,90V155L108,190L49,155V90Z" fill="#e9eef1" />
					<path d="M108,67L156,94L108,121L61,94Z" fill="#b0daf3" /><path d="M61,96L107,123V177L61,150Z" fill="#98d0f0" /><path d="M156,96L110,123V177L156,150Z" fill="#70bce6" />
				</svg>
				<p><strong>3D世界网</strong><small>WWW.3DSJW.COM</small></p>
			</div>
		</section>
	</main>

	<footer class="status">
		<span class="status__msg">选择对象并使用 MB3，或者双击某一对象</span>
		<span class="status__mid"></span>
		<span class="status__slot"></span>
		<span class="status__icons">
			{@render icon('flag', 16)}
			<svg width="16" height="16" viewBox="0 0 16 16"><path d="M0 4V0h4M12 0h4v4M16 12v4h-4M4 16H0v-4" fill="none" stroke="#fff" stroke-width="2" /><path d="M3 4h10v9H3z" fill="#fff" stroke="#333" stroke-width="1.5" /><path d="M5 6h6v5H5z" fill="#2a6ae0" /></svg>
		</span>
	</footer>
</div>

<style>
	:global(body) {
		overflow: hidden;
	}

	.app {
		display: flex;
		flex-direction: column;
		height: 100vh;
		overflow: hidden;
		color: #111;
		font: 12px/16px 'Noto Sans CJK SC', sans-serif;
		white-space: nowrap;
	}

	.defs {
		position: absolute;
	}

	button {
		flex: none;
		margin: 0;
		padding: 0;
		border: 0;
		background: none;
		color: inherit;
		font: inherit;
	}

	h1,
	h2,
	p {
		margin: 0;
	}

	.ic {
		flex: none;
		display: block;
	}

	.titlebar {
		display: flex;
		align-items: center;
		gap: 4px;
		height: 16px;
		padding: 0 0 5px 1px;
		overflow: hidden;
		background: #1c1c1c;
		color: #fff;
	}

	.titlebar h1 {
		flex: 1;
		font: 13px/18px 'Open Sans', 'Noto Sans CJK SC', sans-serif;
	}

	.brand {
		margin-right: 24px;
		font: 800 13px/16px 'Open Sans', sans-serif;
	}

	.winbtns {
		display: flex;
		gap: 4px;
		align-self: flex-start;
		margin-right: -10px;
	}

	.winbtns button {
		height: 17px;
		border: 1px solid #888;
		border-top: 0;
		border-radius: 0 0 3px 3px;
		background: linear-gradient(#666, #333);
	}

	.winbtns .close {
		background: linear-gradient(#f08060, #d83818);
	}

	.winbtns svg {
		display: block;
	}

	.ribbon {
		background: linear-gradient(#e7e7e7, #cacaca);
		border-bottom: 1px solid #8d8d8d;
	}

	.menubar {
		display: flex;
		align-items: center;
		gap: 11px;
		height: 25px;
		border-bottom: 1px solid #b6b6b6;
	}

	.menubar .grip {
		height: 16px;
		margin-right: -11px;
	}

	.menubar :global(.ic) {
		margin-right: -6px;
	}

	.menubar__gap {
		width: 0;
		margin-right: -4px;
	}

	.mdibtns {
		display: flex;
		gap: 2px;
		margin: 0 -4px 0 auto;
	}

	.mdibtns button {
		border: 1px solid #888;
		border-radius: 4px;
		background: linear-gradient(#fff, #ddd);
	}

	.mdibtns svg {
		display: block;
	}

	.grip {
		flex: none;
		align-self: center;
		width: 3px;
		height: 58px;
		margin: 0 1px 0 4px;
		background: repeating-linear-gradient(#999 0 2px, transparent 2px 4px);
	}

	.row {
		display: flex;
		height: 68px;
	}

	.bar {
		display: flex;
		flex: none;
		box-sizing: border-box;
		border-top: 1px solid #f2f2f2;
		border-right: 1px solid #b2b2b2;
		border-bottom: 1px solid #b2b2b2;
	}

	.bar--standard {
		padding-left: 1px;
	}

	.bar--right {
		margin-left: 21px;
		border-left: 1px solid #f2f2f2;
	}

	.bar--curve {
		width: 903px;
	}

	.bar--fill {
		flex: 1 0 auto;
	}

	.tool {
		display: flex;
		align-items: center;
		justify-content: center;
	}

	.tool--big {
		flex-direction: column;
		justify-content: flex-start;
		gap: 5px;
		width: 80px;
		padding-top: 5px;
	}

	.tool--icon {
		width: 31px;
	}

	.tool--text {
		width: 42px;
	}

	.tool--start {
		gap: 4px;
		width: 57px;
	}

	.sep {
		flex: none;
		box-sizing: border-box;
		width: 2px;
		margin: 2px;
		border-left: 1px solid #aeaeae;
		border-right: 1px solid #f4f4f4;
	}

	.drop,
	.more {
		display: flex;
		align-items: center;
		justify-content: center;
		width: 12px;
	}

	.drop::before,
	.more::before {
		content: '';
		border: 3px solid transparent;
		border-top: 4px solid #111;
		border-bottom: 0;
	}

	.more {
		align-items: flex-end;
		width: 14px;
		margin-left: auto;
		padding-bottom: 8px;
	}

	.overflow {
		align-self: flex-start;
		width: 14px;
		margin: 0 -14px 0 auto;
		font: 700 16px/14px 'Liberation Sans', sans-serif;
		text-align: center;
	}

	.overflow + .more {
		margin-left: 0;
	}

	.search {
		display: flex;
		align-items: center;
		align-self: center;
		box-sizing: border-box;
		width: 142px;
		height: 23px;
		margin-left: 2px;
		padding: 0 4px 0 3px;
		border: 1px solid #a0a0a0;
		background: #fff;
	}

	.search input {
		flex: 1;
		min-width: 0;
		padding: 0;
		border: 0;
		outline: 0;
		font: inherit;
	}

	.search input::placeholder {
		color: #999;
	}

	.selbar {
		display: flex;
		height: 29px;
		background: linear-gradient(#dcdcdc, #cecece);
	}

	.selbar .tool--icon {
		width: 23px;
	}

	.selbar .drop {
		width: 10px;
	}

	.selbar .tool--icon :global(.ic) {
		width: 18px;
		height: 18px;
	}

	.selbar .tool--on {
		align-self: center;
		box-sizing: border-box;
		height: 22px;
		border: 1px solid #666;
		border-radius: 2px;
		background: #fff;
	}

	.combo {
		position: relative;
		align-self: center;
		margin-left: 6px;
	}

	.combo--filter {
		width: 146px;
	}

	.combo--scope {
		width: 154px;
		margin: 0 5px 0 9px;
	}

	.combo select {
		appearance: none;
		display: block;
		width: 100%;
		height: 19px;
		padding: 0 1px;
		border: 1px solid #777;
		border-radius: 2px;
		background: #fff;
		color: #111;
		font: inherit;
	}

	.combo::before {
		content: '';
		position: absolute;
		z-index: 1;
		top: 1px;
		right: 1px;
		box-sizing: border-box;
		width: 17px;
		height: 17px;
		border: 1px solid #1a4a90;
		background: linear-gradient(#f4faff, #7fb4e8 50%, #b8dcf8);
		pointer-events: none;
	}

	.combo::after {
		content: '';
		position: absolute;
		z-index: 2;
		top: 7px;
		right: 4px;
		border: 5px solid transparent;
		border-top: 5px solid #111;
		border-bottom: 0;
		pointer-events: none;
	}

	.work {
		display: flex;
		flex: 1;
		min-height: 0;
	}

	.resbar {
		flex: none;
		display: flex;
		flex-direction: column;
		align-items: flex-end;
		width: 31px;
		background: linear-gradient(90deg, #bababa, #a8a8a8);
	}

	.resbar__gear {
		align-self: center;
		height: 32px;
		margin-bottom: 15px;
	}

	.resbar__group {
		display: flex;
		flex-direction: column;
		gap: 2px;
		margin-bottom: 14px;
	}

	.restab {
		display: flex;
		align-items: center;
		justify-content: center;
		box-sizing: border-box;
		width: 27px;
		height: 40px;
		border: 1px solid #777;
		border-right: 0;
		border-radius: 3px 0 0 3px;
		background: linear-gradient(90deg, #c6c6c6, #dadada);
	}

	.restab--active {
		border-color: #aaa;
		background: #ebebeb;
	}

	.nav {
		flex: none;
		display: flex;
		flex-direction: column;
		box-sizing: border-box;
		width: 322px;
		padding: 0 8px 6px 7px;
		border-top: 1px solid #888;
		border-right: 2px solid #8a8a8a;
		background: #ebebeb;
	}

	.nav__head {
		display: flex;
		align-items: center;
		justify-content: space-between;
		height: 31px;
		padding: 0 5px;
	}

	.nav__head h2 {
		font-size: 13px;
		font-weight: 700;
	}

	.nav__max {
		width: 13px;
		height: 12px;
		border: 1px solid #111;
		border-top-width: 2px;
	}

	.nav__box {
		display: flex;
		flex: 1;
		flex-direction: column;
		min-height: 0;
		padding: 1px;
		border: 1px solid #777;
		background: #fff;
	}

	.nav__rows {
		flex: 1;
		overflow: hidden;
	}

	table {
		width: 100%;
		table-layout: fixed;
		border-collapse: collapse;
	}

	th {
		width: 0;
		height: 18px;
		padding: 0 5px;
		border-right: 1px solid #b0b0b0;
		border-bottom: 1px solid #999;
		background: linear-gradient(#fafafa 45%, #dddfe0);
		font-weight: 400;
		text-align: left;
	}

	th:last-child {
		padding: 0;
		width: 1px;
	}

	.c-name {
		width: 189px;
	}

	.c-state {
		width: auto;
	}

	.sort {
		display: inline-block;
		margin: 0 0 4px 16px;
		border: 5px solid transparent;
		border-top: 0;
		border-bottom: 5px solid #111;
	}

	td {
		height: 19px;
		padding: 0;
		border-right: 1px solid #e0e0e0;
		border-bottom: 1px solid #e0e0e0;
	}

	tbody tr:nth-child(even) {
		background: #f6f6f6;
	}

	.node {
		display: flex;
		align-items: center;
		gap: 2px;
		height: 19px;
		padding-left: 9px;
	}

	.node--child {
		padding-left: 29px;
	}

	.node__text {
		padding-left: 1px;
	}

	.node--muted .node__text {
		color: #999;
	}

	.node--current .node__text {
		font-weight: 700;
	}

	.node input {
		appearance: none;
		box-sizing: border-box;
		width: 12px;
		height: 12px;
		margin: 0;
		border: 1px solid #111;
		background: #fff;
	}

	.node input::before,
	.tick::before {
		content: '';
		display: block;
		width: 10px;
		height: 10px;
		background: #18c02c;
		clip-path: polygon(0 50%, 15% 40%, 36% 60%, 80% 0, 100% 5%, 45% 100%, 28% 100%);
	}

	.tick {
		display: inline-block;
		vertical-align: middle;
	}

	.tick::before {
		width: 12px;
		height: 12px;
	}

	td > .tick {
		margin-left: 6px;
	}

	.twig {
		position: relative;
		flex: none;
		align-self: stretch;
		width: 8px;
	}

	.twig::before {
		content: '';
		position: absolute;
		top: 0;
		left: 0;
		bottom: -1px;
		border-left: 1px dotted #999;
	}

	.twig::after {
		content: '';
		position: absolute;
		top: 50%;
		left: 0;
		width: 9px;
		border-top: 1px dotted #999;
	}

	.twig--first::before {
		top: 50%;
	}

	.twig--last::before {
		bottom: 50%;
	}

	.expander {
		position: absolute;
		z-index: 1;
		top: 5px;
		left: -5px;
		width: 7px;
		height: 7px;
		border: 1px solid #888;
		border-radius: 2px;
		background: #fff;
		font: 700 10px/7px 'Liberation Sans', sans-serif;
		text-align: center;
	}

	.hscroll {
		display: flex;
		justify-content: space-between;
		height: 16px;
		background: #f0f0f0;
	}

	.hscroll button {
		width: 17px;
	}

	.hscroll__thumb {
		width: 66%;
		margin-right: auto;
		background: #cdcdcd;
	}

	.splitter {
		display: flex;
		align-items: center;
		gap: 4px;
		height: 12px;
	}

	.splitter::before,
	.splitter::after {
		content: '';
		flex: 1;
		border-top: 1px solid #b0b0b0;
		border-bottom: 1px solid #fff;
	}

	.splitter span {
		width: 51px;
		height: 4px;
		border: 1px solid #999;
		border-top-color: #fff;
		border-left-color: #fff;
		background: #d8d8d8;
	}

	.fold {
		display: flex;
		align-items: center;
		justify-content: space-between;
		height: 22px;
		margin-bottom: 1px;
		padding-left: 7px;
		border-right: 1px solid #999;
		border-bottom: 1px solid #888;
		background: linear-gradient(#f5f7f7 45%, #d2d4d6);
		font-size: 13px;
		font-weight: 700;
	}

	.fold svg {
		border-left: 1px solid #aaa;
	}

	.view {
		position: relative;
		flex: 1;
		min-width: 0;
		background: linear-gradient(#b5b6b8, #e6e8e9 80%);
	}

	.palette {
		position: absolute;
		top: 4px;
		left: 1px;
		box-sizing: border-box;
		border: 1px solid #000;
		border-radius: 5px;
		background: #1a1a1a;
	}

	.palette__title {
		display: flex;
		align-items: center;
		height: 20px;
		border-radius: 4px 4px 0 0;
		background: linear-gradient(#707274, #444 40%, #1a1a1a 55%);
		color: #fff;
		font-size: 17px;
		line-height: 18px;
	}

	.palette__title span {
		flex: 1;
		padding-left: 7px;
	}

	.drop--light::before {
		border-top-color: #fff;
	}

	.palette__close {
		display: flex;
		align-items: center;
		justify-content: center;
		align-self: stretch;
		width: 20px;
		margin-left: 4px;
		border-left: 1px solid #777;
	}

	.palette__body {
		display: flex;
		height: 35px;
		padding: 0 3px 0 2px;
		background: linear-gradient(#e2e2e2, #c9c9c9);
	}

	.tool--finish {
		gap: 3px;
		width: 84px;
		color: #9a9a9a;
	}

	.palette__foot {
		height: 8px;
	}

	.model {
		position: absolute;
		top: 59px;
		left: 677px;
	}

	.model text,
	.triad text {
		font-family: 'Liberation Sans', sans-serif;
	}

	.model text {
		font-size: 12px;
	}

	.triad {
		position: absolute;
		bottom: 14px;
		left: 0;
	}

	.badge {
		position: absolute;
		right: -31px;
		bottom: 78px;
		box-sizing: border-box;
		width: 42px;
		height: 42px;
		padding-left: 3px;
		border: 2px solid #fff;
		border-radius: 50%;
		outline: 1px solid #888;
		background: linear-gradient(#50c878, #38b858);
		box-shadow: 0 3px 6px #999;
		color: #fff;
		font: 700 12px/38px 'Liberation Sans', sans-serif;
	}

	.mark {
		position: absolute;
		z-index: 1;
		right: 22px;
		bottom: -6px;
		display: flex;
		align-items: center;
		gap: 8px;
		color: #f3f4f5;
	}

	.mark strong {
		display: block;
		font: 700 42px/42px 'Noto Sans CJK SC', sans-serif;
	}

	.mark small {
		display: block;
		font: 18px/18px 'DejaVu Sans', sans-serif;
	}

	.status {
		display: flex;
		height: 18px;
		border-top: 1px solid #f4f4f4;
		background: #d8d8d8;
		font-size: 13px;
		font-weight: 700;
	}

	.status__msg {
		box-sizing: border-box;
		width: 903px;
		padding-left: 3px;
		border-right: 1px solid #b0b0b0;
	}

	.status__mid {
		flex: 1;
		border-right: 2px solid #b0b0b0;
	}

	.status__slot {
		width: 18px;
		border-right: 2px solid #b0b0b0;
	}

	.status__icons {
		display: flex;
		gap: 4px;
		align-items: center;
		width: 73px;
		margin-right: 8px;
		padding-left: 2px;
		border-right: 1px solid #b0b0b0;
	}
</style>
